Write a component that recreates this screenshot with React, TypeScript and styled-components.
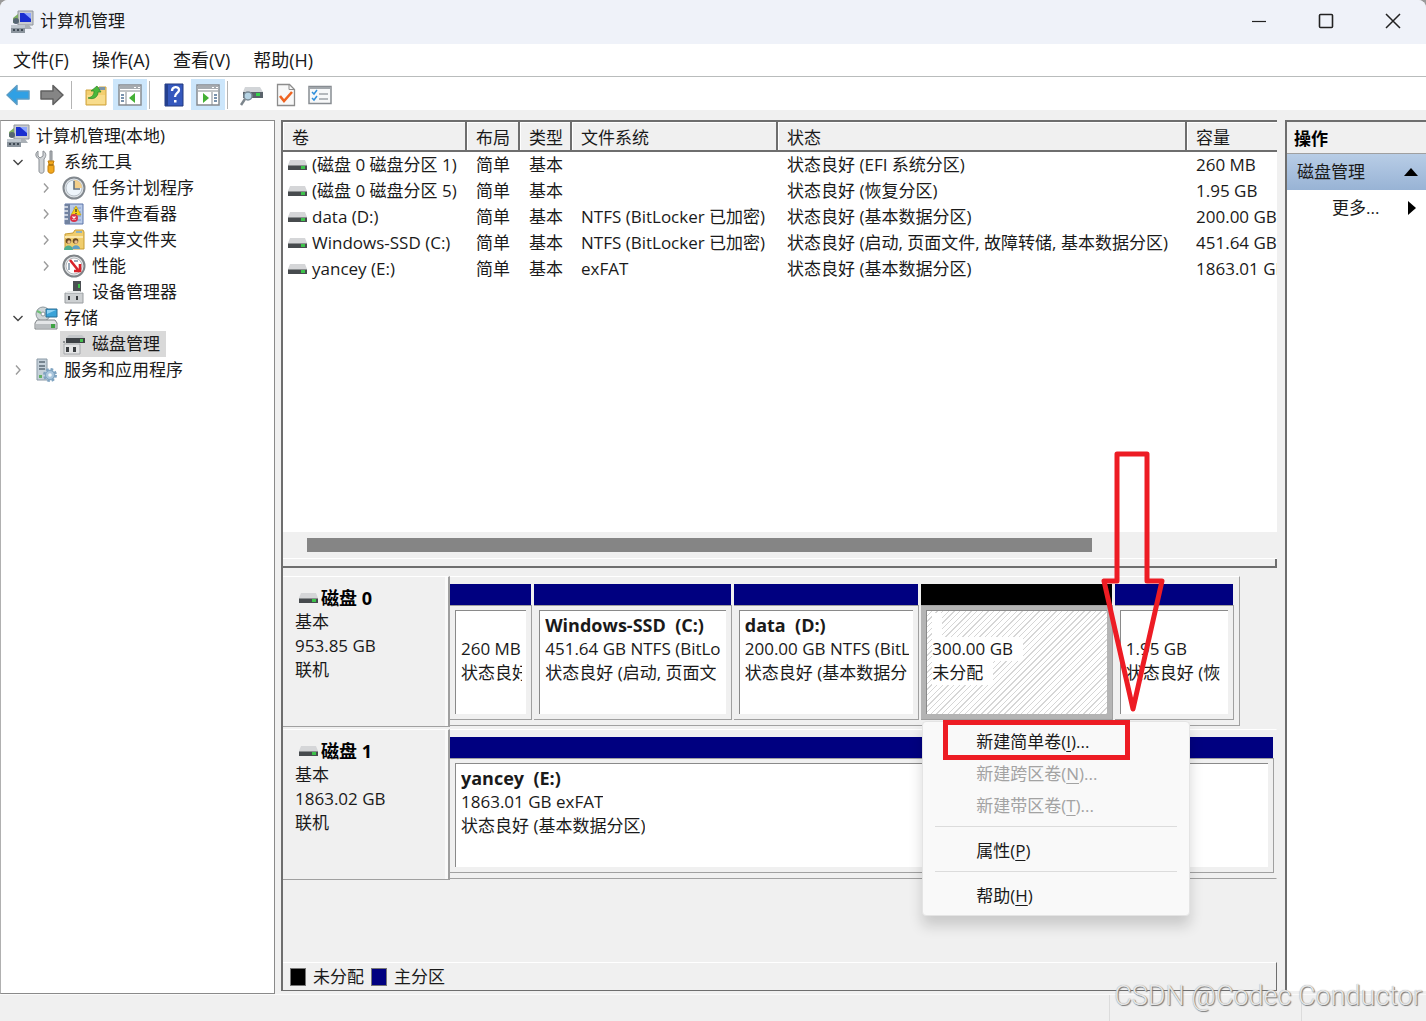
import React from 'react';
import styled, { createGlobalStyle, css } from 'styled-components';

const color = {
  face: '#f0f0f0',
  line: '#a0a0a0',
  dark: '#6e6e6e',
  text: '#1a1a1a',
  navy: '#000080',
  red: '#ed1c24',
};

const GlobalStyle = createGlobalStyle`
  * { box-sizing: border-box; }
  body {
    margin: 0;
    background: #9a9a9a;
    color: ${color.text};
    font-family: "Open Sans", "Noto Sans CJK SC", sans-serif;
    font-size: 17px;
    line-height: 24px;
  }
  button { font: inherit; color: inherit; background: none; border: 0; padding: 0; }
`;

const Window = styled.div`
  position: relative;
  display: flex;
  flex-direction: column;
  height: 100vh;
  min-height: 900px;
  overflow: hidden;
  background: ${color.face};
  border-radius: 8px 8px 0 0;
`;

/* ---------- title, menu and tool bars ---------- */

const TitleBar = styled.header`
  display: flex;
  align-items: center;
  height: 44px;
  padding-left: 10px;
  gap: 6px;
  background: #eff2f9;
  flex: none;
`;

const Title = styled.h1`
  flex: 1;
  margin: 0;
  font-size: 17px;
  font-weight: 400;
  padding-bottom: 3px;
`;

const CaptionButton = styled.button`
  display: flex;
  align-items: center;
  justify-content: center;
  width: 67px;
  height: 42px;
  align-self: flex-start;
`;

const CaptionButtons = styled.div`
  display: flex;
  height: 44px;
`;

const MenuBar = styled.nav`
  display: flex;
  gap: 23px;
  height: 33px;
  padding-left: 13px;
  align-items: center;
  font-size: 18px;
  background: #fff;
  border-bottom: 1px solid #b9bcbc;
  flex: none;
`;

const ToolBar = styled.div`
  display: flex;
  align-items: center;
  height: 33px;
  padding: 2px 0 0 1px;
  background: #fff;
  flex: none;
`;

const ToolButton = styled.button<{ $active?: boolean }>`
  display: flex;
  align-items: center;
  justify-content: center;
  width: 34px;
  height: 31px;
  background: ${(p) => (p.$active ? '#cce6fb' : 'transparent')};
`;

const ToolDivider = styled.span`
  width: 1px;
  height: 28px;
  margin: 0 7px 0 2px;
  background: #b4b4b4;
`;

/* ---------- main area ---------- */

const Main = styled.main`
  display: grid;
  grid-template-columns: 275px minmax(0, 1fr) 141px;
  column-gap: 6px;
  flex: 1;
  min-height: 0;
  padding-top: 10px;
`;

const TreePane = styled.ul`
  list-style: none;
  margin: 0;
  padding: 2px 0 0 3px;
  background: #fff;
  border: 1px solid #8a8a8a;
  border-left-color: #b0b0b0;
`;

const TreeRow = styled.li<{ $depth: number }>`
  display: flex;
  align-items: center;
  height: 26px;
  padding-left: ${(p) => (p.$depth === 0 ? 0 : (p.$depth - 1) * 28)}px;
`;

const Twisty = styled.button`
  display: flex;
  align-items: center;
  justify-content: center;
  width: 28px;
  height: 26px;
`;

const TreeLabel = styled.span<{ $selected?: boolean }>`
  display: flex;
  align-items: center;
  gap: 6px;
  height: 26px;
  padding: 0 6px 0 2px;
  background: ${(p) => (p.$selected ? '#d9d9d9' : 'transparent')};
`;

const Center = styled.section`
  display: flex;
  flex-direction: column;
  margin: 0 2px 3px 0;
  min-width: 0;
  border-top: 2px solid ${color.dark};
  border-left: 2px solid ${color.dark};
  border-bottom: 1px solid ${color.dark};
`;

const VolumeArea = styled.div`
  flex: 1;
  min-height: 0;
  overflow: hidden;
  background: #fff;
`;

const VolumeTable = styled.table`
  width: 100%;
  min-width: 980px;
  table-layout: fixed;
  border-collapse: separate;
  border-spacing: 0;
  white-space: nowrap;

  th {
    height: 30px;
    padding: 3px 0 0 9px;
    overflow: hidden;
    text-align: left;
    font-weight: 400;
    background: ${color.face};
    border-right: 2px solid ${color.dark};
    border-bottom: 2px solid ${color.dark};
    box-shadow: inset 1px 1px 0 #fff;
  }
  th:last-child { border-right: 0; }
  td {
    height: 26px;
    padding: 0 0 0 9px;
    overflow: hidden;
  }
  td:first-child { padding-left: 5px; }
`;

const Col = styled.col<{ $w?: number }>`
  ${(p) => p.$w && css`width: ${p.$w}px;`}
`;

const VolumeName = styled.span`
  display: flex;
  align-items: center;
  gap: 5px;
`;

const ScrollTrack = styled.div`
  height: 27px;
  padding: 6px 24px 7px;
  background: ${color.face};
  border-bottom: 1px solid #fff;
  flex: none;
`;

const ScrollThumb = styled.div`
  width: 83%;
  height: 14px;
  background: #858585;
`;

const Splitter = styled.div`
  height: 9px;
  border-right: 2px solid ${color.dark};
  border-bottom: 2px solid ${color.dark};
  flex: none;
`;

const DiskArea = styled.div`
  display: flex;
  flex-direction: column;
  gap: 2px;
  height: 394px;
  padding-top: 8px;
  flex: none;
`;

const DiskRow = styled.div`
  display: flex;
  height: 151px;
`;

const DiskLabel = styled.div`
  width: 167px;
  padding: 9px 0 0 12px;
  border-top: 1px solid #fff;
  border-right: 2px solid ${color.line};
  border-bottom: 1px solid ${color.line};
  box-shadow: inset -3px 0 0 #fafafa;
`;

const DiskName = styled.div`
  display: flex;
  align-items: center;
  gap: 3px;
  padding-left: 4px;
  font-size: 18px;
  font-weight: 700;
  color: #000;
`;

const Strip = styled.div<{ $short?: boolean }>`
  display: flex;
  flex: 1;
  gap: 2px;
  min-width: 0;
  height: 150px;
  margin-right: ${(p) => (p.$short ? 37 : 0)}px;
  padding: 7px ${(p) => (p.$short ? 5 : 2)}px 5px 0;
  border-top: 1px solid #fff;
  border-bottom: 1px solid ${color.line};
  border-right: 1px solid ${(p) => (p.$short ? color.line : 'transparent')};
`;

const PartitionBox = styled.div<{ $grow: number }>`
  position: relative;
  display: flex;
  flex-direction: column;
  flex: ${(p) => p.$grow} 1 0;
  min-width: 0;
`;

const Bar = styled.div<{ $free?: boolean }>`
  height: 21px;
  margin-right: 1px;
  background: ${(p) => (p.$free ? '#000' : color.navy)};
`;

const Frame = styled.div<{ $free?: boolean }>`
  display: flex;
  flex: 1;
  min-height: 0;
  padding: 4px 5px 5px;
  background: ${(p) => (p.$free ? '#b4b4b4' : color.face)};
  border-top: 1px solid ${color.line};
  border-right: 1px solid ${color.line};
  border-bottom: 1px solid ${color.line};
`;

const Sheet = styled.div<{ $free?: boolean }>`
  flex: 1;
  min-width: 0;
  padding: 2px 4px 0 5px;
  border-top: 1px solid #8a8a8a;
  border-left: 1px solid #8a8a8a;
  background: ${(p) =>
    p.$free
      ? 'repeating-linear-gradient(135deg, #fff 0 3px, #d6d6d6 3px 4px)'
      : '#fff'};
`;

const Line = styled.div<{ $bold?: boolean }>`
  height: 24px;
  overflow: hidden;
  white-space: pre;
  font-size: ${(p) => (p.$bold ? 18 : 17)}px;
  font-weight: ${(p) => (p.$bold ? 700 : 400)};
`;

const Plate = styled.span<{ $free?: boolean }>`
  display: inline-block;
  max-width: 100%;
  height: 24px;
  padding-right: ${(p) => (p.$free ? 10 : 0)}px;
  overflow: hidden;
  vertical-align: top;
  background: #fff;
`;

const Legend = styled.div`
  display: flex;
  align-items: center;
  gap: 7px;
  height: 28px;
  padding-left: 7px;
  border-top: 1px solid #fff;
  border-right: 1px solid ${color.dark};
  flex: none;
`;

const Swatch = styled.span<{ $color: string }>`
  width: 16px;
  height: 18px;
  background: ${(p) => p.$color};
  border: 1px solid #777;
`;

/* ---------- actions pane ---------- */

const Actions = styled.aside`
  margin-bottom: 3px;
  background: #fff;
  border-top: 2px solid ${color.dark};
  border-left: 2px solid ${color.dark};
`;

const ActionsTitle = styled.h2`
  margin: 0;
  height: 32px;
  padding: 5px 0 0 7px;
  font-size: 17px;
  line-height: 24px;
  color: #000;
  background: ${color.face};
  border-bottom: 1px solid ${color.line};
`;

const ActionsGroup = styled.button`
  display: flex;
  align-items: center;
  justify-content: space-between;
  width: 100%;
  height: 36px;
  padding: 0 7px 0 10px;
  background: linear-gradient(#b8cde6, #98b3d5);
`;

const ActionsItem = styled(ActionsGroup)`
  padding-left: 45px;
  background: none;
`;

/* ---------- context menu and annotations ---------- */

const Menu = styled.div`
  position: absolute;
  z-index: 2;
  top: 100%;
  left: 1px;
  width: 268px;
  margin-top: 1px;
  padding: 4px 0 3px;
  background: #f9f9f9;
  border: 1px solid #e4e4e4;
  border-radius: 4px;
  box-shadow: 0 10px 14px rgba(0, 0, 0, 0.16);
`;

const MenuItem = styled.button`
  display: block;
  width: 100%;
  height: 32px;
  padding-left: 53px;
  text-align: left;
  &:disabled { color: #a3a3a3; }
  u { text-underline-offset: 3px; text-decoration-thickness: 1px; }
`;

const MenuRule = styled.hr`
  height: 1px;
  margin: 4px 12px 8px;
  border: 0;
  background: #dcdcdc;
`;

const Highlight = styled.div`
  position: absolute;
  top: -2px;
  left: 20px;
  width: 187px;
  height: 40px;
  border: 5px solid ${color.red};
  pointer-events: none;
`;

const Arrow = styled.svg`
  position: absolute;
  z-index: 3;
  top: -133px;
  right: -52px;
  overflow: visible;
  pointer-events: none;
`;

const StatusBar = styled.footer`
  display: grid;
  grid-template-columns: minmax(0, 1fr) 192px 125px;
  height: 27px;
  border-top: 1px solid #fafafa;
  flex: none;
`;

const StatusCell = styled.span`
  border-left: 1px solid #dcdcdc;
  &:first-child { border: 0; }
`;

const Watermark = styled.div`
  position: absolute;
  z-index: 4;
  right: 4px;
  bottom: 9px;
  font-family: Roboto, sans-serif;
  font-size: 27px;
  font-weight: 300;
  line-height: 32px;
  color: rgba(236, 236, 236, 0.95);
  text-shadow: 1px 1px 1px #777, 0 0 1px #999;
`;

/* ---------- icons ---------- */

const ComputerIcon = () => (
  <svg width="24" height="24" viewBox="0 0 24 24">
    <path d="M8 1h15v14H8z" fill="#c9ccd0" stroke="#8f959c" />
    <path d="M10 3h11v9H10z" fill="#1a2fd0" />
    <path d="M14 3h7v6z" fill="#8da6ff" />
    <path d="M12 15h7l3 4H10z" fill="#aab0b6" />
    <path d="M3 8l5-4v9H3z" fill="#7fae62" />
    <circle cx="6" cy="11" r="3" fill="#566573" />
    <path d="M1 15h14v8H1z" fill="#8b949d" />
    <path d="M1 15h14v3H1z" fill="#c0c8cf" />
    <path d="M3 19h2v2H3zM7 19h2v2H7zM11 19h2v2h-2z" fill="#3f4a54" />
  </svg>
);

const ToolsIcon = () => (
  <svg width="24" height="24" viewBox="0 0 24 24">
    <path d="M4 1v5l2 2 3-2V1c3 1 4 5 1 8v12c0 3-5 3-5 0V9C1 7 1 3 4 1z" fill="#d0d3d6" stroke="#8a8f94" />
    <path d="M16 1h2v11h-2z" fill="#b5b9bd" stroke="#85898d" />
    <path d="M14 11h6l-1 3 1 2v5c0 3-6 3-6 0v-5l1-2z" fill="#f2a81c" stroke="#c27d0b" />
    <path d="M15 15h4" stroke="#7a5208" />
  </svg>
);

const ClockIcon = () => (
  <svg width="24" height="24" viewBox="0 0 24 24">
    <circle cx="12" cy="12" r="10.5" fill="#dfe4e8" stroke="#82888e" strokeWidth="2" />
    <circle cx="12" cy="12" r="8" fill="#eef5fb" stroke="#b9c1c9" />
    <path d="M12 4a8 8 0 0 1 8 8h-8z" fill="#f4cf8a" />
    <path d="M12 5v8h6" fill="none" stroke="#66727e" strokeWidth="1.6" />
  </svg>
);

const EventIcon = () => (
  <svg width="24" height="24" viewBox="0 0 24 24">
    <path d="M3 2h18v20H3z" fill="#b9cbe8" stroke="#5c74a8" />
    <path d="M3 2h5v20H3z" fill="#7182a0" />
    <path d="M2 5h4M2 9h4M2 13h4M2 17h4" stroke="#e5e9f0" strokeWidth="1.5" />
    <path d="M11 6h8M11 10h8M11 14h8M11 18h8" stroke="#7f9ad0" />
    <path d="M14 4l5 9H9z" fill="#f7d117" stroke="#b99600" strokeWidth=".6" />
    <path d="M14 7v3M14 11v1" stroke="#333" strokeWidth="1.3" />
    <circle cx="12" cy="16" r="4" fill="#d9344a" />
    <path d="M10.5 14.500l3 3M13.5 14.500l-3 3" stroke="#fff" strokeWidth="1.2" />
  </svg>
);

const SharedIcon = () => (
  <svg width="24" height="24" viewBox="0 0 24 24">
    <path d="M3 6l8-1 2-3h8l1 2v17H3z" fill="#f0cd6d" stroke="#c79c33" />
    <path d="M14 4h6" stroke="#6fa8d8" strokeWidth="1.5" />
    <path d="M3 9h18" stroke="#fbe7ab" strokeWidth="2" />
    <circle cx="6.5" cy="13" r="2.8" fill="#6b4a24" />
    <circle cx="13.5" cy="13" r="2.8" fill="#6b4a24" />
    <circle cx="7" cy="14" r="1.7" fill="#e9bf93" />
    <circle cx="14" cy="14" r="1.7" fill="#e9bf93" />
    <path d="M2 22c0-6 9-6 9 0z" fill="#4fae8e" />
    <path d="M10 21c0-5 8-5 8 0z" fill="#5f9fc4" />
  </svg>
);

const GaugeIcon = () => (
  <svg width="24" height="24" viewBox="0 0 24 24">
    <circle cx="12" cy="12" r="10.5" fill="#e6e8ea" stroke="#7f8488" strokeWidth="2" />
    <circle cx="12" cy="12" r="8" fill="#fff" stroke="#b3b7bb" />
    <path d="M7 16V9M12 7h4" fill="none" stroke="#7c93a8" strokeWidth="1.5" />
    <path d="M8 6l8 10M18 10v7h-6" fill="none" stroke="#d8232a" strokeWidth="2.6" />
  </svg>
);

const DeviceIcon = () => (
  <svg width="24" height="24" viewBox="0 0 24 24">
    <path d="M11 1h8v13h-8z" fill="#4b4f53" />
    <path d="M16 4h2v4h-2z" fill="#3fc04a" />
    <path d="M3 13h18v10H3z" fill="#cdd0d2" stroke="#9a9ea1" />
    <path d="M3 13l3-2h12l3 2z" fill="#e4e6e7" />
    <path d="M6 16h2v4H6zM14 16h2v4h-2z" fill="#3a3d40" />
  </svg>
);

const StorageIcon = () => (
  <svg width="24" height="24" viewBox="0 0 24 24">
    <circle cx="9" cy="8" r="7" fill="#cfd6d8" stroke="#8d979b" />
    <circle cx="9" cy="8" r="2" fill="#fff" stroke="#8d979b" />
    <path d="M3 5l4 2" stroke="#6dbf76" strokeWidth="2" />
    <path d="M12 3h11v8H12z" fill="#3aa3d8" stroke="#2b6f96" />
    <path d="M13 4h9l-9 4z" fill="#8fd2f2" />
    <path d="M3 14h18l2 3v6H1v-6z" fill="#e4e6e8" stroke="#7e8386" />
    <path d="M2 18h20v4H2z" fill="#b9bdc0" />
    <path d="M17 18h4v4h-4z" fill="#3ea344" />
  </svg>
);

const DiskMgmtIcon = () => (
  <svg width="24" height="24" viewBox="0 0 24 24">
    <path d="M7 3h13l3 3H4z" fill="#c4c7ca" />
    <path d="M4 6h19v5H4z" fill="#3e4246" />
    <path d="M18 7h3v3h-3z" fill="#46c04f" />
    <path d="M2 12h16v10H2z" fill="#e3e4e5" stroke="#a5a8ab" />
    <path d="M1 9h2v2H1z" fill="#8c9093" />
    <path d="M4 15h3v5H4zM11 15h3v5h-3z" fill="#3a3d40" />
  </svg>
);

const ServicesIcon = () => (
  <svg width="24" height="24" viewBox="0 0 24 24">
    <path d="M3 1h10v21H3z" fill="#c5d1da" stroke="#8b9aa6" />
    <path d="M5 4h6M5 8h6M5 11h6" stroke="#5c6b77" strokeWidth="1.5" />
    <path d="M5 17h3v3H5z" fill="#62b263" />
    <circle cx="16" cy="17" r="5.5" fill="#a9c6dd" stroke="#7fa3c0" strokeWidth="3" strokeDasharray="2.5 1.8" />
    <circle cx="16" cy="17" r="4.5" fill="#a9c6dd" stroke="#7fa3c0" />
    <circle cx="16" cy="17" r="1.8" fill="#f3f8fb" />
  </svg>
);

const DriveIcon = () => (
  <svg width="19" height="13" viewBox="0 0 19 13">
    <path d="M2 1h15l2 5H0z" fill="#d5d6d8" />
    <path d="M0 6h19v5H0z" fill="#474b4e" />
    <path d="M0 6h19v1H0z" fill="#8b8e90" />
    <path d="M13 7h4v3h-4z" fill="#3cc24a" />
  </svg>
);

const BackIcon = ({ forward }: { forward?: boolean }) => (
  <svg width="24" height="22" viewBox="0 0 24 22">
    <path
      transform={forward ? 'matrix(-1 0 0 1 24 0)' : undefined}
      d="M1 11L11 1.5V7h12v8H11v5.5z"
      fill={forward ? '#858585' : '#2fa0e4'}
      stroke={forward ? '#606060' : '#5c9cc4'}
      strokeWidth="1.5"
      strokeLinejoin="round"
    />
  </svg>
);

const FolderUpIcon = () => (
  <svg width="22" height="24" viewBox="0 0 22 24">
    <path d="M1 7h10l3-3h7v18H1z" fill="#f3cf70" stroke="#cfa440" />
    <path d="M2 12h18v9H2z" fill="#f8dc8c" />
    <path d="M14 4h6v3h-6z" fill="#7d96a8" />
    <path d="M3 15c4-1 6-3 6-7L6 8l6-5 4 6h-3c0 5-4 8-10 6z" fill="#49b83b" stroke="#2c8425" strokeWidth=".7" />
  </svg>
);

const PaneIcon = ({ right }: { right?: boolean }) => (
  <svg width="24" height="22" viewBox="0 0 24 22">
    <path d="M1 1h22v20H1z" fill="#fff" stroke="#868b90" strokeWidth="1.5" />
    <path d="M1 2h22v3H1z" fill="#a7acb1" />
    <path d="M2 7h20" stroke="#868b90" />
    <path d="M16 3.5h2M20 3.5h2" stroke="#fff" />
    <g transform={right ? 'matrix(-1 0 0 1 24 0)' : undefined}>
      <path d="M8 8v13" stroke="#868b90" />
      <path d="M3 11h3M3 14h3M3 17h3" stroke="#4d6f92" strokeWidth="1.5" />
      <path d="M17 9v10l-6-5z" fill="#44b035" />
    </g>
  </svg>
);

const HelpIcon = () => (
  <svg width="20" height="24" viewBox="0 0 20 24">
    <path d="M1 1h18v22H1z" fill="#3558bd" stroke="#23387e" />
    <path d="M1 1h3v22H1z" fill="#24408f" />
    <path d="M8 8c0-5 7-5 7-1 0 3-4 3-4 7" fill="none" stroke="#fff" strokeWidth="2.3" />
    <path d="M10 17h2.5v2.5H10z" fill="#fff" />
  </svg>
);

const DriveToolIcon = () => (
  <svg width="24" height="22" viewBox="0 0 24 22">
    <path d="M5 3h15l3 5H3z" fill="#d2d5d8" />
    <path d="M3 8h20v6H3z" fill="#5a636b" />
    <path d="M16 9h4v3h-4z" fill="#35d24b" />
    <circle cx="8" cy="12" r="4" fill="#b5d3e4" stroke="#7a8b97" strokeWidth="1.5" />
    <path d="M5 15l-4 6" stroke="#7c858c" strokeWidth="2.5" />
  </svg>
);

const CheckDocIcon = () => (
  <svg width="20" height="24" viewBox="0 0 20 24">
    <path d="M1.5 1.5h12l5 5v16h-17z" fill="#f8f8f8" stroke="#8c8c8c" strokeWidth="1.3" />
    <path d="M13 1.5v5h5" fill="none" stroke="#8c8c8c" />
    <path d="M4 13l4 5 8-9" fill="none" stroke="#ee6320" strokeWidth="2.6" />
  </svg>
);

const ListIcon = () => (
  <svg width="24" height="20" viewBox="0 0 24 20">
    <path d="M1 1.5h22v17H1z" fill="#f7f8f9" stroke="#888d92" strokeWidth="1.5" />
    <path d="M1 3h22" stroke="#a2a7ac" strokeWidth="2" />
    <path d="M4 7l2 2 3-4M4 13l2 2 3-4" fill="none" stroke="#2f8fdb" strokeWidth="1.5" />
    <path d="M11 9h9M11 14h9" stroke="#9ea3a8" strokeWidth="1.5" />
  </svg>
);

const Chevron = ({ open }: { open?: boolean }) => (
  <svg width="12" height="12" viewBox="0 0 12 12" fill="none" strokeWidth="1.4">
    {open ? <path d="M1.5 4L6 8.5 10.5 4" stroke="#444" /> : <path d="M4 1.5L8 6l-4 4.5" stroke="#9b9b9b" />}
  </svg>
);

/* ---------- data ---------- */

type Node = { label: string; depth: number; icon: React.FC; open?: boolean; selected?: boolean };

const tree: Node[] = [
  { label: '计算机管理(本地)', depth: 0, icon: ComputerIcon },
  { label: '系统工具', depth: 1, icon: ToolsIcon, open: true },
  { label: '任务计划程序', depth: 2, icon: ClockIcon, open: false },
  { label: '事件查看器', depth: 2, icon: EventIcon, open: false },
  { label: '共享文件夹', depth: 2, icon: SharedIcon, open: false },
  { label: '性能', depth: 2, icon: GaugeIcon, open: false },
  { label: '设备管理器', depth: 2, icon: DeviceIcon },
  { label: '存储', depth: 1, icon: StorageIcon, open: true },
  { label: '磁盘管理', depth: 2, icon: DiskMgmtIcon, selected: true },
  { label: '服务和应用程序', depth: 1, icon: ServicesIcon, open: false },
];

const columns: { name: string; width?: number }[] = [
  { name: '卷', width: 184 },
  { name: '布局', width: 53 },
  { name: '类型', width: 52 },
  { name: '文件系统', width: 206 },
  { name: '状态', width: 409 },
  { name: '容量' },
];

const volumes = [
  ['(磁盘 0 磁盘分区 1)', '简单', '基本', '', '状态良好 (EFI 系统分区)', '260 MB'],
  ['(磁盘 0 磁盘分区 5)', '简单', '基本', '', '状态良好 (恢复分区)', '1.95 GB'],
  ['data (D:)', '简单', '基本', 'NTFS (BitLocker 已加密)', '状态良好 (基本数据分区)', '200.00 GB'],
  ['Windows-SSD (C:)', '简单', '基本', 'NTFS (BitLocker 已加密)', '状态良好 (启动, 页面文件, 故障转储, 基本数据分区)', '451.64 GB'],
  ['yancey (E:)', '简单', '基本', 'exFAT', '状态良好 (基本数据分区)', '1863.01 GB'],
];

type PartitionProps = {
  grow: number;
  title?: string;
  size: string;
  status: string;
  free?: boolean;
  children?: React.ReactNode;
};

const Partition = ({ grow, title, size, status, free, children }: PartitionProps) => (
  <PartitionBox $grow={grow}>
    <Bar $free={free} />
    <Frame $free={free}>
      <Sheet $free={free}>
        <Line $bold>{title ?? (free ? <Plate $free /> : ' ')}</Line>
        <Line><Plate $free={free}>{size}</Plate></Line>
        <Line><Plate $free={free}>{status}</Plate></Line>
      </Sheet>
    </Frame>
    {children}
  </PartitionBox>
);

const Disk = ({ name, size, short, children }: { name: string; size: string; short?: boolean; children: React.ReactNode }) => (
  <DiskRow>
    <DiskLabel>
      <DiskName><DriveIcon />{name}</DiskName>
      <div>基本</div>
      <div>{size}</div>
      <div>联机</div>
    </DiskLabel>
    <Strip $short={short}>{children}</Strip>
  </DiskRow>
);

const ContextMenu = () => (
  <Menu role="menu">
    <MenuItem role="menuitem">新建简单卷(<u>I</u>)...</MenuItem>
    <MenuItem role="menuitem" disabled>新建跨区卷(<u>N</u>)...</MenuItem>
    <MenuItem role="menuitem" disabled>新建带区卷(<u>T</u>)...</MenuItem>
    <MenuRule />
    <MenuItem role="menuitem">属性(<u>P</u>)</MenuItem>
    <MenuRule />
    <MenuItem role="menuitem">帮助(<u>H</u>)</MenuItem>
    <Highlight />
  </Menu>
);

export default function App() {
  return (
    <>
      <GlobalStyle />
      <Window>
        <TitleBar>
          <ComputerIcon />
          <Title>计算机管理</Title>
          <CaptionButtons>
            <CaptionButton aria-label="最小化">
              <svg width="16" height="16"><path d="M1 8.5h14" stroke="#222" strokeWidth="1.2" /></svg>
            </CaptionButton>
            <CaptionButton aria-label="最大化">
              <svg width="16" height="16"><rect x="1.5" y="1.5" width="13" height="13" rx="1" fill="none" stroke="#222" strokeWidth="1.6" /></svg>
            </CaptionButton>
            <CaptionButton aria-label="关闭">
              <svg width="16" height="16"><path d="M1 1l14 14M15 1L1 15" stroke="#222" strokeWidth="1.5" /></svg>
            </CaptionButton>
          </CaptionButtons>
        </TitleBar>

        <MenuBar>
          {['文件(F)', '操作(A)', '查看(V)', '帮助(H)'].map((m) => (
            <button key={m}>{m}</button>
          ))}
        </MenuBar>

        <ToolBar>
          <ToolButton aria-label="后退"><BackIcon /></ToolButton>
          <ToolButton aria-label="前进"><BackIcon forward /></ToolButton>
          <ToolDivider />
          <ToolButton aria-label="向上"><FolderUpIcon /></ToolButton>
          <ToolButton aria-label="显示控制台树" $active><PaneIcon /></ToolButton>
          <ToolDivider />
          <ToolButton aria-label="帮助"><HelpIcon /></ToolButton>
          <ToolButton aria-label="显示操作窗格" $active><PaneIcon right /></ToolButton>
          <ToolDivider />
          <ToolButton aria-label="磁盘"><DriveToolIcon /></ToolButton>
          <ToolButton aria-label="属性"><CheckDocIcon /></ToolButton>
          <ToolButton aria-label="列表"><ListIcon /></ToolButton>
        </ToolBar>

        <Main>
          <TreePane>
            {tree.map(({ label, depth, icon: Icon, open, selected }) => (
              <TreeRow key={label} $depth={depth}>
                {depth > 0 && (
                  <Twisty aria-label={label}>{open !== undefined && <Chevron open={open} />}</Twisty>
                )}
                <TreeLabel $selected={selected}><Icon />{label}</TreeLabel>
              </TreeRow>
            ))}
          </TreePane>

          <Center>
            <VolumeArea>
              <VolumeTable>
                <colgroup>
                  {columns.map((c) => <Col key={c.name} $w={c.width} />)}
                </colgroup>
                <thead>
                  <tr>{columns.map((c) => <th key={c.name}>{c.name}</th>)}</tr>
                </thead>
                <tbody>
                  {volumes.map((row) => (
                    <tr key={row[0]}>
                      {row.map((cell, i) => (
                        <td key={columns[i].name}>
                          {i === 0 ? <VolumeName><DriveIcon />{cell}</VolumeName> : cell}
                        </td>
                      ))}
                    </tr>
                  ))}
                </tbody>
              </VolumeTable>
            </VolumeArea>
            <ScrollTrack><ScrollThumb /></ScrollTrack>
            <Splitter />
            <DiskArea>
              <Disk name="磁盘 0" size="953.85 GB" short>
                <Partition grow={82} size="260 MB" status="状态良好" />
                <Partition grow={197} title="Windows-SSD  (C:)" size="451.64 GB NTFS (BitLo" status="状态良好 (启动, 页面文" />
                <Partition grow={185} title="data  (D:)" size="200.00 GB NTFS (BitL" status="状态良好 (基本数据分" />
                <Partition grow={191} size="300.00 GB" status="未分配" free>
                  <ContextMenu />
                  <Arrow width="64" height="260" viewBox="0 0 64 260">
                    <path
                      d="M16 3h30v127h15L32 258 3 130h13z"
                      fill="none"
                      stroke={color.red}
                      strokeWidth="5"
                      strokeLinejoin="round"
                    />
                  </Arrow>
                </Partition>
                <Partition grow={119} size="1.95 GB" status="状态良好 (恢" />
              </Disk>
              <Disk name="磁盘 1" size="1863.02 GB">
                <Partition grow={1} title="yancey  (E:)" size="1863.01 GB exFAT" status="状态良好 (基本数据分区)" />
              </Disk>
            </DiskArea>
            <Legend>
              <Swatch $color="#000" />未分配
              <Swatch $color={color.navy} />主分区
            </Legend>
          </Center>

          <Actions>
            <ActionsTitle>操作</ActionsTitle>
            <ActionsGroup>
              磁盘管理
              <svg width="16" height="10"><path d="M1 9l7-8 7 8z" fill="#000" /></svg>
            </ActionsGroup>
            <ActionsItem>
              更多...
              <svg width="16" height="16"><path d="M5 1l8 7-8 7z" fill="#000" /></svg>
            </ActionsItem>
          </Actions>
        </Main>

        <StatusBar>
          <StatusCell />
          <StatusCell />
          <StatusCell />
        </StatusBar>
        <Watermark>CSDN @Codec Conductor</Watermark>
      </Window>
    </>
  );
}
